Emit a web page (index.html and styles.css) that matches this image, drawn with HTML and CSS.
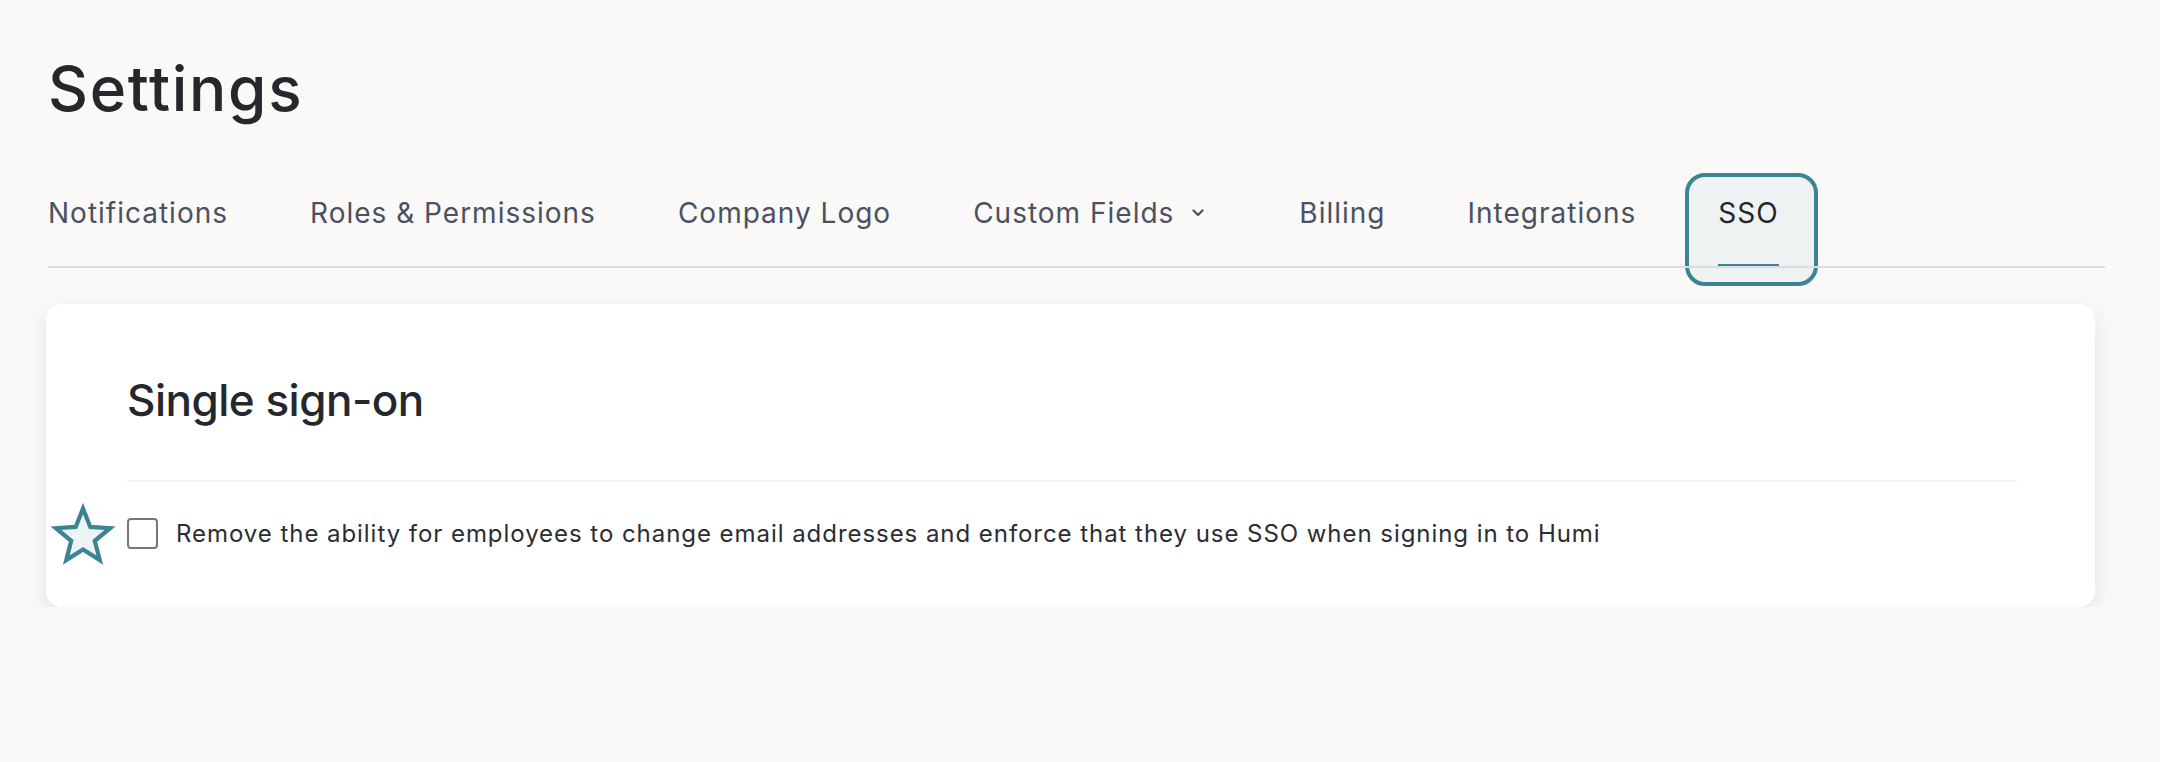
FILE: index.html
```html
<!DOCTYPE html>
<html lang="en">
<head>
<meta charset="utf-8">
<title>Settings - SSO</title>
<link rel="stylesheet" href="styles.css">
</head>
<body>
<main class="page">
  <h1 class="title">Settings</h1>
  <nav class="tabs">
    <div class="tab-list">
      <a class="tab"><span class="tab-label">Notifications</span></a>
      <a class="tab"><span class="tab-label">Roles &amp; Permissions</span></a>
      <a class="tab"><span class="tab-label">Company Logo</span></a>
      <a class="tab tab-dropdown"><span class="tab-label">Custom Fields<svg class="chevron" viewBox="0 0 12 8" width="12" height="8"><path d="M1.5 1.5 L6 6 L10.5 1.5" fill="none" stroke="currentColor" stroke-width="2.2" stroke-linecap="round" stroke-linejoin="round"/></svg></span></a>
      <a class="tab"><span class="tab-label">Billing</span></a>
      <a class="tab"><span class="tab-label">Integrations</span></a>
      <a class="tab tab-active tab-focus"><span class="tab-label">SSO</span></a>
    </div>
  </nav>
  <section class="card">
    <svg class="star-marker" viewBox="0 0 70 70" width="70" height="70"><polygon points="35,7.5 42.29,25.97 62.11,27.19 46.79,39.83 51.75,59.06 35,48.4 18.25,59.06 23.21,39.83 7.89,27.19 27.71,25.97" fill="#eef4f6" stroke="#3a8591" stroke-width="4.2" stroke-linejoin="miter"/></svg>
    <h2 class="card-title">Single sign-on</h2>
    <hr class="divider">
    <label class="check-row">
      <span class="checkbox"></span>
      <span class="check-text">Remove the ability for employees to change email addresses and enforce that they use SSO when signing in to Humi</span>
    </label>
  </section>
</main>
</body>
</html>
```
FILE: styles.css
```css
html {
  margin: 0;
}
body {
  margin: 0;
  background: #faf9f7;
  font-family: Inter, "Noto Sans", "Liberation Sans", sans-serif;
  color: #25272d;
}
.page {
  padding: 58px 55px 0 48px;
}
.title {
  margin: 0 0 73px;
  font-size: 62px;
  line-height: 62px;
  font-weight: 500;
  color: #25272d;
  letter-spacing: 1.7px;
}
.tabs {
  border-bottom: 2px solid #dcdcdc;
}
.tab-list {
  display: flex;
  gap: 50px;
  margin-left: -16px;
}
.tab {
  position: relative;
  display: block;
  padding: 3px 16px 0;
  font-size: 28px;
  line-height: 34px;
  letter-spacing: 1px;
  color: #4b5160;
  text-decoration: none;
}
.tab-label {
  display: flex;
  align-items: center;
  padding-bottom: 34px;
  border-bottom: 2px solid transparent;
}
.chevron {
  margin: 0 13px 0 18px;
  color: #4b5160;
}
.tab-active {
  color: #24262c;
}
.tab-active .tab-label {
  border-bottom-color: #3a8591;
}
.tab-focus::before {
  content: "";
  position: absolute;
  top: -20px;
  bottom: -20px;
  left: -17px;
  right: -23px;
  border: 4px solid #3a8591;
  border-radius: 20px;
  background: #eef2f3;
  z-index: -1;
}
.card {
  position: relative;
  margin: 36px 10px 0 -2px;
  padding: 70px 78px 58px 81px;
  background: #ffffff;
  border-radius: 16px;
  box-shadow: 0 8px 24px rgba(0, 0, 0, 0.09);
}
.star-marker {
  position: absolute;
  left: 2px;
  top: 197px;
}
.card-title {
  margin: 0 0 53px;
  font-size: 44px;
  line-height: 53px;
  font-weight: 500;
  letter-spacing: -0.5px;
  color: #25272d;
}
.divider {
  border: 0;
  height: 2px;
  background: #f1f1f1;
  margin: 0 0 36px;
}
.check-row {
  display: flex;
  align-items: center;
  gap: 18px;
}
.checkbox {
  flex: none;
  box-sizing: border-box;
  width: 31px;
  height: 31px;
  border: 2px solid #777777;
  border-radius: 4px;
  background: #ffffff;
}
.check-text {
  font-size: 24px;
  line-height: 31px;
  letter-spacing: 0.95px;
  color: #2b2d33;
}
```
